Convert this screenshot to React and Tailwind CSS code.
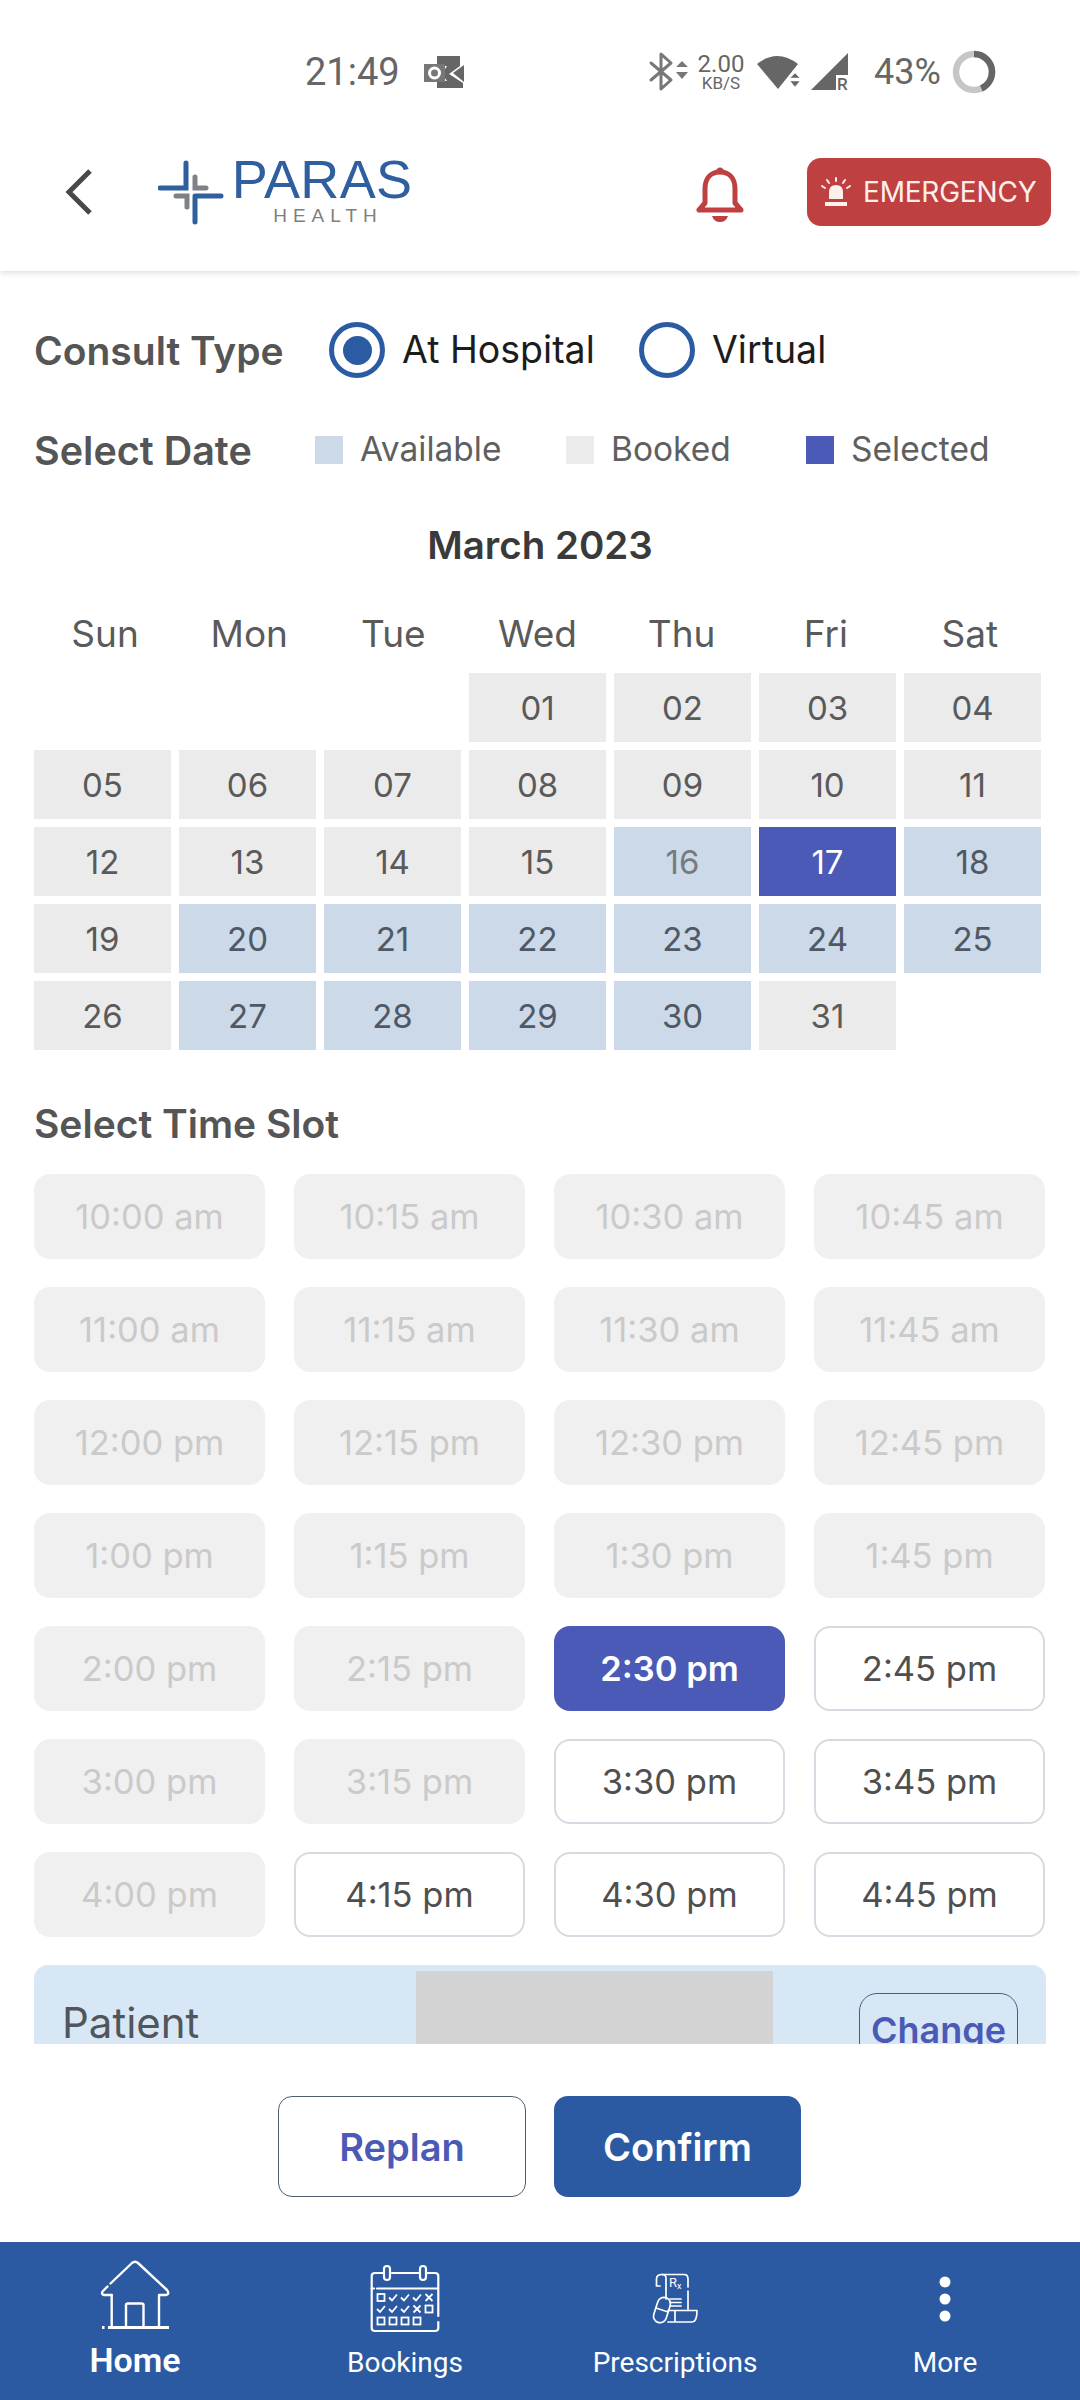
import React from "react";

const available = new Set([16, 18, 20, 21, 22, 23, 24, 25, 27, 28, 29, 30]);
const days = ["Sun", "Mon", "Tue", "Wed", "Thu", "Fri", "Sat"];
const slots = [
  ["10:00 am", 0], ["10:15 am", 0], ["10:30 am", 0], ["10:45 am", 0],
  ["11:00 am", 0], ["11:15 am", 0], ["11:30 am", 0], ["11:45 am", 0],
  ["12:00 pm", 0], ["12:15 pm", 0], ["12:30 pm", 0], ["12:45 pm", 0],
  ["1:00 pm", 0], ["1:15 pm", 0], ["1:30 pm", 0], ["1:45 pm", 0],
  ["2:00 pm", 0], ["2:15 pm", 0], ["2:30 pm", 2], ["2:45 pm", 1],
  ["3:00 pm", 0], ["3:15 pm", 0], ["3:30 pm", 1], ["3:45 pm", 1],
  ["4:00 pm", 0], ["4:15 pm", 1], ["4:30 pm", 1], ["4:45 pm", 1],
];

function StatusBar() {
  return (
    <div className="h-[144px] flex items-center pl-[305px] font-['Roboto',sans-serif] text-[#666666] shrink-0">
      <span className="text-[38px] leading-none w-[93px]">21:49</span>
      <svg width="42" height="34" viewBox="0 0 42 34" className="ml-[25px]">
        <path d="M14 1 H37 V11 L26 19 L40 28 V33 H14 V26 H24 L19 19 L24 11 H14 Z" fill="#666666" />
        <path d="M30 18 L41 10 V27 Z" fill="#666666" />
        <rect x="1" y="9" width="21" height="18" fill="#777777" />
        <circle cx="11.5" cy="18" r="5" fill="none" stroke="#ffffff" strokeWidth="3" />
      </svg>
      <svg width="42" height="40" viewBox="0 0 42 40" className="ml-[183px]">
        <path d="M3 11 L23 28 L13 37 V2 L23 11 L3 28" fill="none" stroke="#777777" strokeWidth="3" strokeLinejoin="round" strokeLinecap="round" />
        <path d="M28 15 L34 9 L40 15 Z M28 20 H40 L34 27 Z" fill="#777777" />
      </svg>
      <div className="ml-[5px] w-[52px] flex flex-col items-center">
        <span className="text-[24px] leading-[21px]">2.00</span>
        <span className="text-[17px] leading-[16px]">KB/S</span>
      </div>
      <svg width="44" height="36" viewBox="0 0 44 36" className="ml-[10px]">
        <path d="M0 10 Q20 -6 41 10 L21 35 Z" fill="#666666" />
        <path d="M33 24 L38 19 L43 24 Z M33 27 H43 L38 33 Z" fill="#666666" stroke="#ffffff" strokeWidth="0.5" />
      </svg>
      <svg width="38" height="38" viewBox="0 0 38 38" className="ml-[10px]">
        <path d="M0 37 L37 0 V37 Z" fill="#666666" />
        <rect x="25" y="22" width="13" height="16" fill="#ffffff" />
        <text x="26" y="37" fontSize="17" fontFamily="Roboto" fontWeight="500" fill="#666666">R</text>
      </svg>
      <span className="text-[36px] leading-none ml-[25px] w-[68px]">43%</span>
      <svg width="44" height="44" viewBox="0 0 44 44" className="ml-[10px]">
        <circle cx="22" cy="22" r="18" fill="none" stroke="#c6c6c6" strokeWidth="6.5" />
        <circle cx="22" cy="22" r="18" fill="none" stroke="#666666" strokeWidth="6.5" strokeDasharray="48.6 113" transform="rotate(-90 22 22)" />
      </svg>
    </div>
  );
}

function Logo() {
  return (
    <div className="flex items-center ml-[66px]">
      <svg width="66" height="66" viewBox="0 0 66 66">
        <g fill="none" strokeWidth="5" strokeLinecap="round">
          <path d="M37 18 V29 H48 M18 37 H29 V48" stroke="#7d8288" />
          <path d="M28 4 V29 H2 M37 38 V63 M37 37 H63" stroke="#2f5f9e" />
        </g>
      </svg>
      <div className="flex flex-col items-center ml-[10px] -mt-[1px] w-[176px]">
        <span className="font-['Liberation_Sans',sans-serif] text-[54px] leading-[44px] tracking-[0.3px] text-[#2f5f9e]">PARAS</span>
        <span className="font-['Liberation_Sans',sans-serif] text-[19px] leading-[20px] tracking-[6px] text-[#7f7f7f] mt-[5px] ml-[12px]">HEALTH</span>
      </div>
    </div>
  );
}

function Header() {
  return (
    <div className="relative z-10 shrink-0 bg-white h-[271px] shadow-[0_2px_6px_rgba(0,0,0,0.14)] flex flex-col">
      <StatusBar />
      <div className="h-[96px] flex items-center">
        <div className="w-[65px]" />
        <svg width="28" height="46" viewBox="0 0 28 46">
          <path d="M25 2 L4 23 L25 44" fill="none" stroke="#484848" strokeWidth="5" />
        </svg>
        <div className="-ml-[1px]">
          <Logo />
        </div>
        <svg width="48" height="56" viewBox="0 0 48 56" className="ml-[286px] mt-[5px]">
          <circle cx="24" cy="4" r="3.5" fill="#bf4040" />
          <path d="M24 5 C14 5 9 12 9 22 V36 L3 43 H45 L39 36 V22 C39 12 34 5 24 5 Z" fill="none" stroke="#bf4040" strokeWidth="5" strokeLinejoin="round" />
          <path d="M16 49 H32 Q30 55 24 55 Q18 55 16 49 Z" fill="#bf4040" />
        </svg>
        <div className="ml-[63px] w-[244px] h-[68px] rounded-[14px] bg-[#bf4040] flex items-center pl-[14px]">
          <svg width="30" height="30" viewBox="0 0 30 30">
            <g stroke="#fdf0ea" strokeWidth="2" fill="none" strokeLinecap="round">
              <path d="M15 1 V4 M6 3 L8 6 M24 3 L22 6 M1 9 L4 11 M29 9 L26 11" />
            </g>
            <path d="M8 22 V15 Q8 8 15 8 Q22 8 22 15 V22 Z" fill="#fdf0ea" />
            <rect x="4" y="25" width="22" height="4" fill="#fdf0ea" />
          </svg>
          <span className="ml-[12px] font-['Inter',sans-serif] text-[28px] leading-none text-[#fdf0ea] tracking-[-0.2px]">EMERGENCY</span>
        </div>
      </div>
    </div>
  );
}

function Radio({ on }) {
  return (
    <span className="w-[56px] h-[56px] rounded-full border-[5px] border-[#2b5ca3] flex items-center justify-center shrink-0">
      {on && <span className="w-[29px] h-[29px] rounded-full bg-[#2b5ca3]" />}
    </span>
  );
}

function Legend({ color, label, className }) {
  return (
    <div className={"flex items-center " + className}>
      <span className={"w-[28px] h-[28px] " + color} />
      <span className="ml-[17px] text-[33.5px] leading-none text-[#5f5f5f] -mt-[1px]">{label}</span>
    </div>
  );
}

function Calendar() {
  const cells = [null, null, null];
  for (let d = 1; d <= 31; d++) cells.push(d);
  return (
    <div className="grid grid-cols-[repeat(7,137px)] auto-rows-[69px] gap-[8px] mt-[15px]">
      {cells.map((d, i) => {
        if (d === null) return <div key={i} />;
        let cls = "bg-[#ebebeb] text-[#5a5a5a]";
        if (d === 17) cls = "bg-[#4a5ab6] text-white";
        else if (d === 16) cls = "bg-[#cbd9e8] text-[#777b80]";
        else if (available.has(d)) cls = "bg-[#cbd9e8] text-[#4f5864]";
        return (
          <div key={i} className={"flex items-center justify-center text-[33px] leading-none pt-[2px] " + cls}>
            {String(d).padStart(2, "0")}
          </div>
        );
      })}
    </div>
  );
}

function Slots() {
  return (
    <div className="grid grid-cols-[repeat(4,231px)] auto-rows-[85px] gap-x-[29px] gap-y-[28px] mt-[26px]">
      {slots.map(([t, s]) => {
        let cls = "bg-[#f0f0f0] text-[#cacaca]";
        if (s === 1) cls = "bg-white border-2 border-[#d5dbe0] text-[#4f4f4f]";
        if (s === 2) cls = "bg-[#4a5ab6] text-white font-semibold";
        return (
          <div key={t} className={"rounded-[16px] flex items-center justify-center text-[34.5px] leading-none pt-[2px] " + cls}>
            {t}
          </div>
        );
      })}
    </div>
  );
}

function PatientCard() {
  return (
    <div className="mt-[28px] bg-[#d8e7f5] rounded-t-[14px] h-[140px] w-[1012px] flex items-start pl-[28px]">
      <span className="w-[354px] mt-[33px] text-[42px] leading-[50px] text-[#50565c]">Patient</span>
      <div className="w-[357px] h-[100px] mt-[6px] bg-[#d3d3d3]" />
      <div className="ml-[86px] mt-[28px] w-[159px] h-[90px] rounded-[18px] border-[1.5px] border-[#4a5f80] flex items-start justify-center pt-[14px]">
        <span className="text-[36px] leading-[44px] font-semibold text-[#4a5ab6]">Change</span>
      </div>
    </div>
  );
}

function Main() {
  return (
    <div className="h-[1773px] shrink-0 overflow-hidden pl-[34px] pt-[51px] font-['Inter',sans-serif]">
      <div className="flex items-center h-[56px]">
        <span className="text-[39px] leading-none font-semibold text-[#555555] w-[295px]">Consult Type</span>
        <Radio on />
        <span className="ml-[17px] text-[37.5px] leading-none text-[#1c1c1c] w-[237px]">At Hospital</span>
        <Radio />
        <span className="ml-[17px] text-[37.5px] leading-none text-[#1c1c1c]">Virtual</span>
      </div>
      <div className="flex items-center h-[40px] mt-[52px]">
        <span className="text-[39.5px] leading-none font-semibold text-[#555555] w-[281px] mt-[3px]">Select Date</span>
        <Legend color="bg-[#cbd9e8]" label="Available" className="w-[251px]" />
        <Legend color="bg-[#ebebeb]" label="Booked" className="w-[240px]" />
        <Legend color="bg-[#4a5ab6]" label="Selected" className="" />
      </div>
      <div className="h-[50px] mt-[50px] w-[1012px] flex items-center justify-center text-[38.5px] leading-none font-semibold text-[#3a3a3a]">
        March 2023
      </div>
      <div className="h-[50px] mt-[38px] -ml-[1px] w-[1009px] grid grid-cols-7">
        {days.map((d) => (
          <div key={d} className="flex items-center justify-center text-[37px] leading-none text-[#5a5a5a]">{d}</div>
        ))}
      </div>
      <Calendar />
      <div className="h-[50px] mt-[48px] flex items-center text-[39px] leading-none font-semibold text-[#555555]">Select Time Slot</div>
      <Slots />
      <PatientCard />
    </div>
  );
}

function Footer() {
  return (
    <div className="h-[198px] shrink-0 bg-white flex items-start justify-center pt-[52px] gap-[28px] font-['Inter',sans-serif] pr-[1px]">
      <div className="w-[248px] h-[101px] rounded-[14px] border-[1.5px] border-[#4e5f70] flex items-center justify-center text-[38px] font-semibold leading-none text-[#4a5ab6]">Replan</div>
      <div className="w-[247px] h-[101px] rounded-[14px] bg-[#2b5aa3] flex items-center justify-center text-[38px] font-semibold leading-none text-white">Confirm</div>
    </div>
  );
}

function HomeIcon() {
  return (
    <svg width="80" height="80" viewBox="0 0 80 80">
      <g fill="none" stroke="#ffffff" strokeWidth="2.4" strokeLinecap="round" strokeLinejoin="round">
        <path d="M16.7 37 H9 Q5.5 36 8 33 L12.5 28.5 M15.5 25.5 L37 5 Q40 2.5 43 5 L72 32 Q75 36 71 37 H64 V69" />
        <path d="M16.7 37 V69" />
        <path d="M31 69 V47 Q31 45.5 33 45.5 H46.5 Q48.5 45.5 48.5 47 V69" />
      </g>
      <path d="M13 69.5 H74 M7 69.5 H9.5" stroke="#ffffff" strokeWidth="3" fill="none" />
    </svg>
  );
}

function CalendarIcon() {
  const Box = ({ x, y }) => <rect x={x - 3.5} y={y - 3.5} width="7" height="7" fill="none" stroke="#fff" strokeWidth="1.8" />;
  const Check = ({ x, y }) => <path d={`M${x - 4} ${y} L${x - 1} ${y + 3} L${x + 4} ${y - 3}`} fill="none" stroke="#fff" strokeWidth="1.8" />;
  const Cross = ({ x, y }) => <path d={`M${x - 3.5} ${y - 3.5} L${x + 3.5} ${y + 3.5} M${x + 3.5} ${y - 3.5} L${x - 3.5} ${y + 3.5}`} fill="none" stroke="#fff" strokeWidth="1.8" />;
  const xs = [16, 28, 40, 52, 64];
  return (
    <svg width="80" height="80" viewBox="0 0 80 80">
      <g fill="none" stroke="#ffffff" strokeWidth="2.2" strokeLinecap="round" strokeLinejoin="round">
        <path d="M18 15 H10 Q6.7 15 6.7 18 V70 Q6.7 73 10 73 H70 Q73.3 73 73.3 70 V64 M73.3 58 V18 Q73.3 15 70 15 H62.5 M27 15 H54" />
        <rect x="19" y="8" width="6" height="14" rx="3" />
        <rect x="55" y="8" width="6" height="14" rx="3" />
        <path d="M12 30.5 H73 M6.7 30.5 H9" />
      </g>
      <Box x={xs[0]} y={39.5} /><Check x={xs[1]} y={39.5} /><Check x={xs[2]} y={39.5} /><Check x={xs[3]} y={39.5} /><Cross x={xs[4]} y={39.5} />
      <Check x={xs[0]} y={51} /><Check x={xs[1]} y={51} /><Check x={xs[2]} y={51} /><Cross x={xs[3]} y={51} /><Box x={xs[4]} y={51} />
      <Box x={xs[0]} y={63} /><Box x={xs[1]} y={63} /><Box x={xs[2]} y={63} /><Box x={xs[3]} y={63} />
    </svg>
  );
}

function RxIcon() {
  return (
    <svg width="80" height="80" viewBox="0 0 80 80">
      <g fill="none" stroke="#ffffff" strokeWidth="1.7" strokeLinecap="round" strokeLinejoin="round">
        <path d="M31 30 V20 Q31 16.5 27 16.5 Q21.5 16.5 21.5 21 V28 H25" />
        <path d="M27 16.5 H49 Q53 16.5 53 21 V29 M53 33 V52.5" />
        <path d="M31 30 V41" />
        <path d="M35 41 H46 M35 44.5 H46 M35 48 H46" />
        <g transform="rotate(18 27 52)">
          <rect x="20.5" y="39" width="13" height="26" rx="6.5" />
          <path d="M20.5 52 H33.5" />
        </g>
        <path d="M33 52.5 H62 Q62 64 57 64 H33 M40 52.5 V64" />
      </g>
      <text x="34" y="29" fontSize="13" fontFamily="Roboto" fill="#ffffff">R</text>
      <text x="42" y="31" fontSize="9" fontFamily="Roboto" fill="#ffffff">x</text>
    </svg>
  );
}

function DotsIcon() {
  return (
    <svg width="80" height="80" viewBox="0 0 80 80">
      <circle cx="40" cy="24" r="5.5" fill="#fff" />
      <circle cx="40" cy="41" r="5.5" fill="#fff" />
      <circle cx="40" cy="58" r="5.5" fill="#fff" />
    </svg>
  );
}

function NavItem({ icon, label, active }) {
  return (
    <div className="flex flex-col items-center pt-[16px]">
      {icon}
      <span className={"leading-[36px] text-white " + (active ? "mt-[4px] text-[34px] font-semibold" : "mt-[7px] text-[28px]")}>{label}</span>
    </div>
  );
}

function BottomNav() {
  return (
    <div className="h-[158px] shrink-0 bg-[#2b5aa2] grid grid-cols-4 font-['Roboto',sans-serif]">
      <NavItem icon={<HomeIcon />} label="Home" active />
      <NavItem icon={<CalendarIcon />} label="Bookings" />
      <NavItem icon={<RxIcon />} label="Prescriptions" />
      <NavItem icon={<DotsIcon />} label="More" />
    </div>
  );
}

export default function App() {
  return (
    <div className="w-[1080px] h-[2400px] bg-white flex flex-col overflow-hidden">
      <Header />
      <Main />
      <Footer />
      <BottomNav />
    </div>
  );
}
